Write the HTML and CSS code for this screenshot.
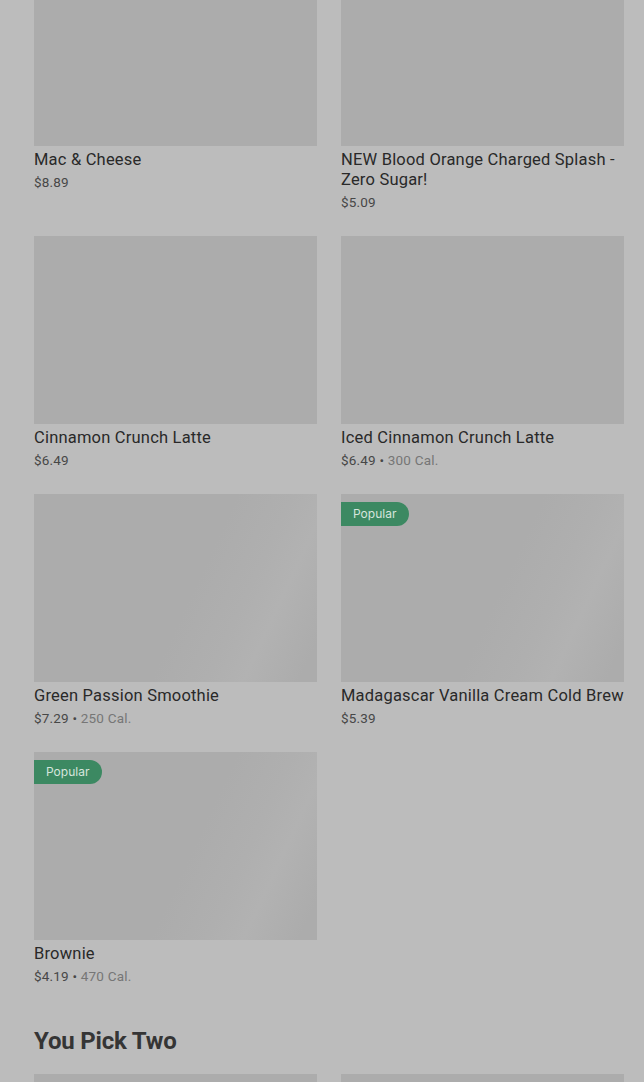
FILE: index.html
```html
<!DOCTYPE html>
<html lang="en">
<head>
    <meta charset="UTF-8">
    <meta name="viewport" content="width=device-width, initial-scale=1.0">
    <title>Menu</title>
    <link rel="stylesheet" href="styles.css">
</head>
<body>
    <main class="menu">
        <!-- Lista de produtos -->
        <div class="grid first">
            <div class="card">
                <div class="thumb"></div>
                <h3 class="name">Mac &amp; Cheese</h3>
                <p class="info"><span class="price">$8.89</span></p>
            </div>
            <div class="card">
                <div class="thumb"></div>
                <h3 class="name">NEW Blood Orange Charged Splash - Zero Sugar!</h3>
                <p class="info"><span class="price">$5.09</span></p>
            </div>
            <div class="card">
                <div class="thumb"></div>
                <h3 class="name">Cinnamon Crunch Latte</h3>
                <p class="info"><span class="price">$6.49</span></p>
            </div>
            <div class="card">
                <div class="thumb"></div>
                <h3 class="name">Iced Cinnamon Crunch Latte</h3>
                <p class="info"><span class="price">$6.49</span> • <span class="cal">300 Cal.</span></p>
            </div>
            <div class="card">
                <div class="thumb shimmer"></div>
                <h3 class="name">Green Passion Smoothie</h3>
                <p class="info"><span class="price">$7.29</span> • <span class="cal">250 Cal.</span></p>
            </div>
            <div class="card">
                <div class="thumb shimmer"><span class="badge">Popular</span></div>
                <h3 class="name">Madagascar Vanilla Cream Cold Brew</h3>
                <p class="info"><span class="price">$5.39</span></p>
            </div>
            <div class="card">
                <div class="thumb shimmer"><span class="badge">Popular</span></div>
                <h3 class="name">Brownie</h3>
                <p class="info"><span class="price">$4.19</span> • <span class="cal">470 Cal.</span></p>
            </div>
        </div>

        <h2 class="section-title">You Pick Two</h2>

        <div class="grid">
            <div class="card">
                <div class="thumb"></div>
            </div>
            <div class="card">
                <div class="thumb"></div>
            </div>
        </div>
    </main>
</body>
</html>
```

FILE: styles.css
```css
* {
    margin: 0;
    padding: 0;
    box-sizing: border-box;
}
body {
    background: #bcbcbc;
    font-family: Roboto, 'Liberation Sans', sans-serif;
    color: #383838;
    overflow: hidden;
}
.menu {
    padding: 0 20px 0 34px;
}
.grid {
    display: grid;
    grid-template-columns: 1fr 1fr;
    column-gap: 24px;
    row-gap: 24px;
}
.grid.first {
    margin-top: -42px;
}
.thumb {
    position: relative;
    height: 188px;
    background: #acacac;
}
.thumb.shimmer {
    background: linear-gradient(115deg, #acacac 55%, #afafaf 70%, #b2b2b2 80%, #acacac 95%);
}
.badge {
    position: absolute;
    top: 8px;
    left: 0;
    height: 24px;
    padding: 0 13px 0 12px;
    border-radius: 0 12px 12px 0;
    background: #3c8962;
    color: #d6e5dd;
    font-family: Inter, sans-serif;
    font-size: 12px;
    line-height: 24px;
}
.name {
    margin-top: 4px;
    font-size: 16.5px;
    font-weight: 400;
    line-height: 20px;
    letter-spacing: 0.2px;
    color: #292929;
}
.info {
    margin: 3px 0 1px;
    font-size: 13.5px;
    line-height: 18px;
    letter-spacing: 0.2px;
    color: #474747;
}
.cal {
    color: #767676;
}
.section-title {
    margin: 39px 0 17px;
    font-size: 24px;
    font-weight: 700;
    line-height: 32px;
    letter-spacing: -0.2px;
    color: #353535;
}
```
